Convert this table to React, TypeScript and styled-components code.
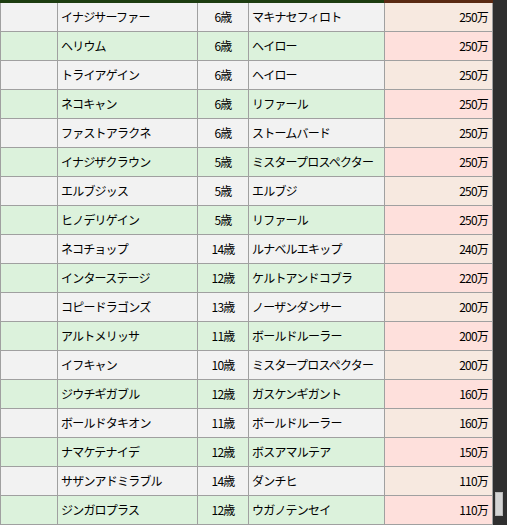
import React from "react";
import styled, { createGlobalStyle } from "styled-components";

const Global = createGlobalStyle`
  html, body { margin: 0; padding: 0; background: #ffffff; overflow: hidden; }
  body { font-family: "Noto Sans CJK JP", "Noto Sans", sans-serif; }
`;

type Row = { name: string; age: string; sire: string; price: string };

const rows: Row[] = [
  { name: "イナジサーファー", age: "6歳", sire: "マキナセフィロト", price: "250万" },
  { name: "ヘリウム", age: "6歳", sire: "ヘイロー", price: "250万" },
  { name: "トライアゲイン", age: "6歳", sire: "ヘイロー", price: "250万" },
  { name: "ネコキャン", age: "6歳", sire: "リファール", price: "250万" },
  { name: "ファストアラクネ", age: "6歳", sire: "ストームバード", price: "250万" },
  { name: "イナジザクラウン", age: "5歳", sire: "ミスタープロスペクター", price: "250万" },
  { name: "エルブジッス", age: "5歳", sire: "エルブジ", price: "250万" },
  { name: "ヒノデリゲイン", age: "5歳", sire: "リファール", price: "250万" },
  { name: "ネコチョップ", age: "14歳", sire: "ルナベルエキップ", price: "240万" },
  { name: "インターステージ", age: "12歳", sire: "ケルトアンドコブラ", price: "220万" },
  { name: "コピードラゴンズ", age: "13歳", sire: "ノーザンダンサー", price: "200万" },
  { name: "アルトメリッサ", age: "11歳", sire: "ボールドルーラー", price: "200万" },
  { name: "イフキャン", age: "10歳", sire: "ミスタープロスペクター", price: "200万" },
  { name: "ジウチギガブル", age: "12歳", sire: "ガスケンギガント", price: "160万" },
  { name: "ボールドタキオン", age: "11歳", sire: "ボールドルーラー", price: "160万" },
  { name: "ナマケテナイデ", age: "12歳", sire: "ボスアマルテア", price: "150万" },
  { name: "サザンアドミラブル", age: "14歳", sire: "ダンチヒ", price: "110万" },
  { name: "ジンガロプラス", age: "12歳", sire: "ウガノテンセイ", price: "110万" },
];

const Frame = styled.div`
  display: flex;
  width: 507px;
  height: 525px;
  overflow: hidden;
`;

const TableArea = styled.div`
  width: 493px;
  display: flex;
  flex-direction: column;
`;

const Cols = "57px 140px 51px 136px 109px";

const HeaderStrip = styled.div`
  display: grid;
  grid-template-columns: 384px 109px;
  height: 3px;
  flex: none;
`;

const HeadCell = styled.div<{ $tone: "green" | "brown" }>`
  background: ${(p) => (p.$tone === "green" ? "#1d3d10" : "#5a2913")};
`;

const RowLine = styled.div`
  display: grid;
  grid-template-columns: ${Cols};
  height: 29px;
  flex: none;
  box-sizing: border-box;
  border-bottom: 1px solid #a0a0a0;
  font-size: 12px;
  line-height: 28px;
  color: #000;
  letter-spacing: -0.8px;
`;

const Cell = styled.div<{ $bg: string; $align?: "left" | "center" | "right" }>`
  background: ${(p) => p.$bg};
  border-left: 1px solid #a0a0a0;
  box-sizing: border-box;
  text-align: ${(p) => p.$align ?? "left"};
  padding: ${(p) => (p.$align === "right" ? "0 4px 0 0" : p.$align === "center" ? "0" : "0 0 0 3px")};
  white-space: nowrap;
  overflow: hidden;
`;

const LastCell = styled(Cell)`
  border-right: 1px solid #a0a0a0;
`;

const ScrollTrack = styled.div`
  width: 14px;
  background: #2f2f2f;
  display: flex;
  flex-direction: column;
  align-items: flex-start;
  padding-left: 2px;
  box-sizing: border-box;
`;

const Thumb = styled.div`
  margin-top: 492px;
  width: 8px;
  height: 24px;
  background: #d4d4d4;
  border: 1px solid #b8b8b8;
  box-sizing: border-box;
`;

export default function App() {
  return (
    <>
      <Global />
      <Frame>
        <TableArea>
          <HeaderStrip>
            <HeadCell $tone="green" />
            <HeadCell $tone="brown" />
          </HeaderStrip>
          {rows.map((r, i) => {
            const even = i % 2 === 1;
            const base = even ? "#dcf2dc" : "#f2f2f2";
            const money = even ? "#fee0dc" : "#f7e9e0";
            return (
              <RowLine key={i}>
                <Cell $bg={base} />
                <Cell $bg={base}>{r.name}</Cell>
                <Cell $bg={base} $align="center">{r.age}</Cell>
                <Cell $bg={base}>{r.sire}</Cell>
                <LastCell $bg={money} $align="right">{r.price}</LastCell>
              </RowLine>
            );
          })}
        </TableArea>
        <ScrollTrack>
          <Thumb />
        </ScrollTrack>
      </Frame>
    </>
  );
}
